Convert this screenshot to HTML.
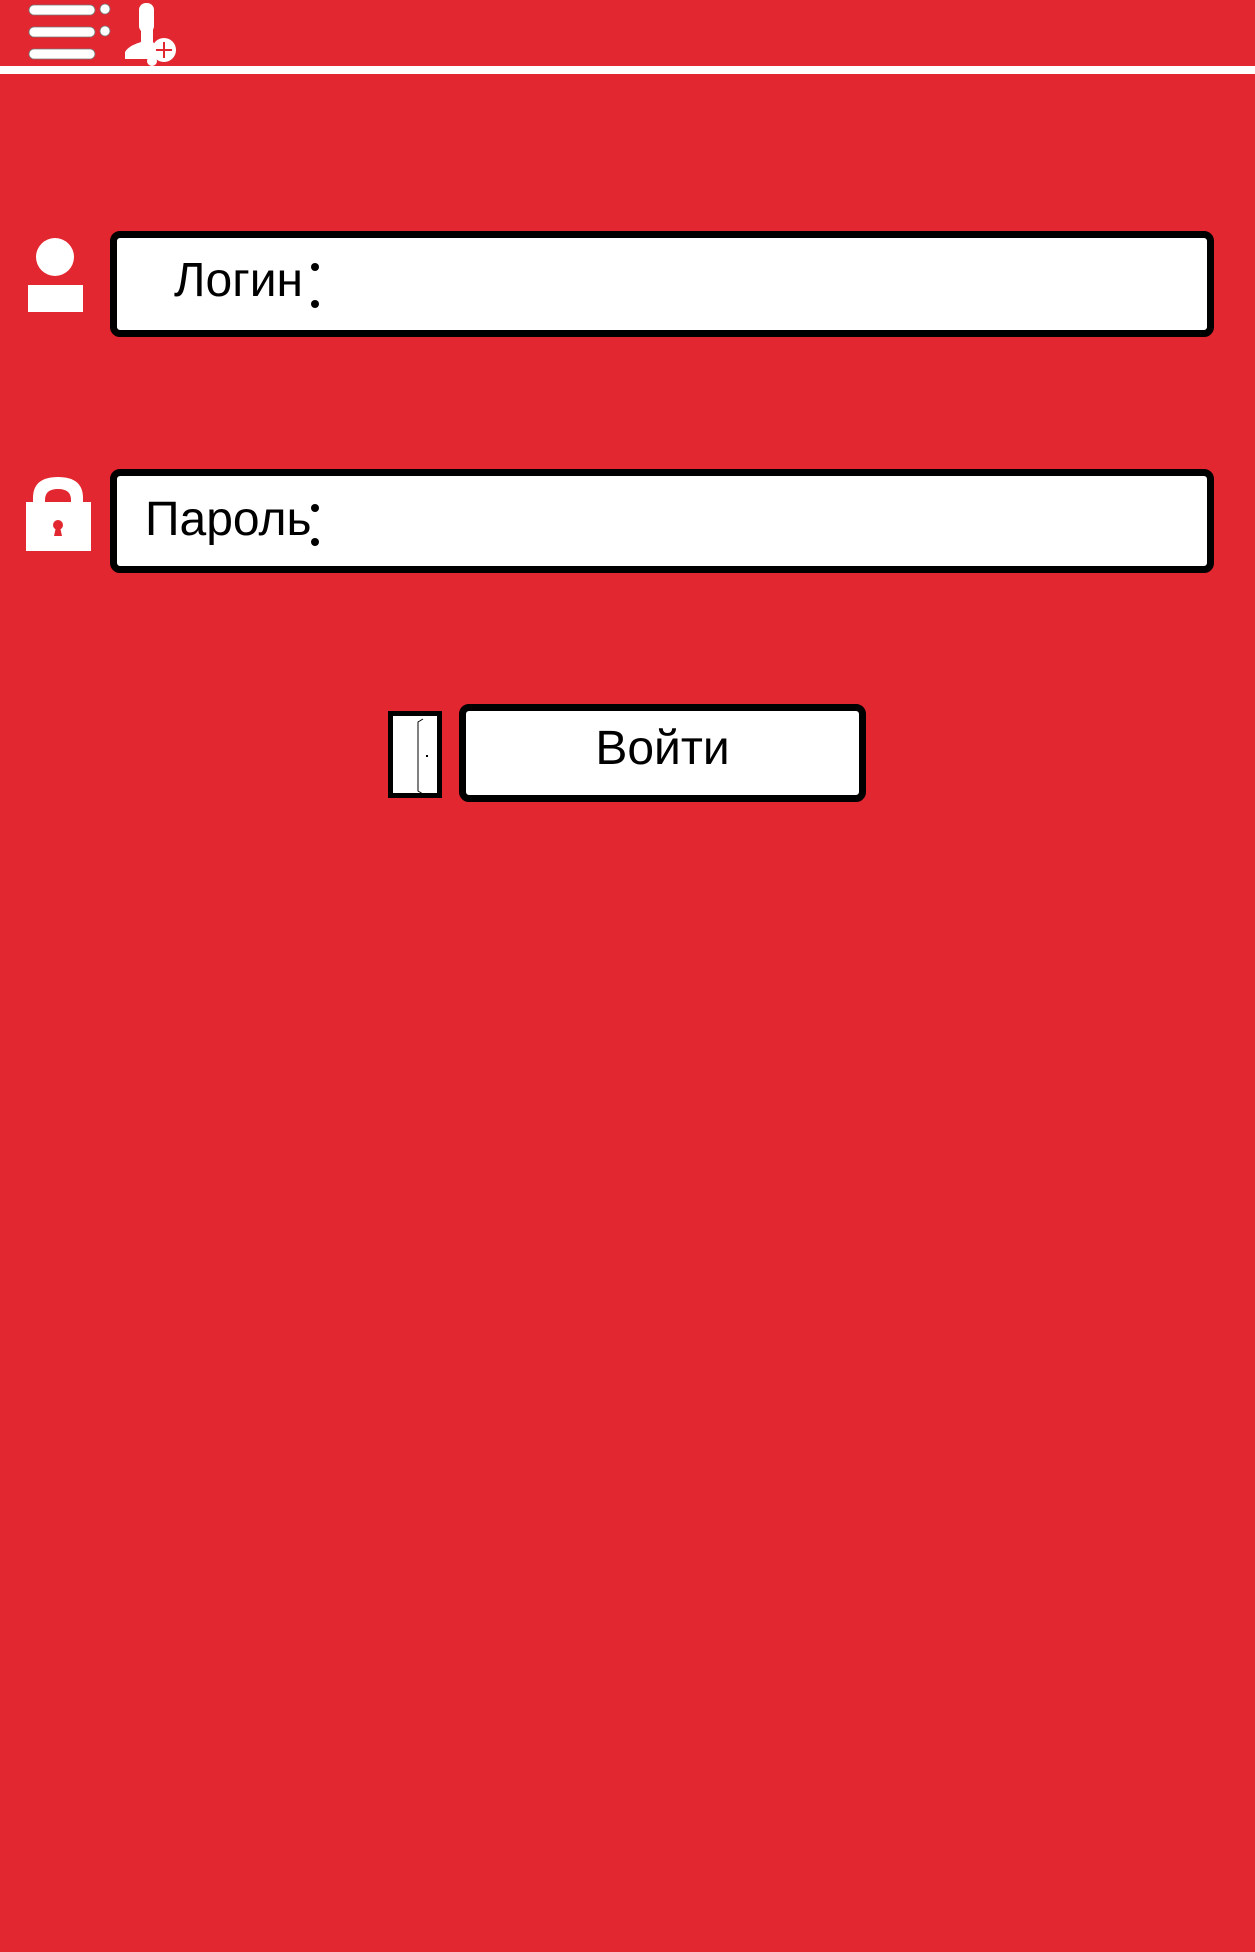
<!DOCTYPE html>
<html><head><meta charset="utf-8"><style>
*{margin:0;padding:0;box-sizing:border-box}
body{width:1255px;height:1952px;background:#e22730;position:relative;overflow:hidden;font-family:"Liberation Sans","DejaVu Sans",sans-serif}
.abs{position:absolute}
.box{position:absolute;background:#fff;border:7px solid #000;border-radius:10px}
.lbl{position:absolute;font-size:48px;color:#000;line-height:1}
.dot{position:absolute;width:8px;height:8px;border-radius:50%;background:#000}
</style></head><body>
<svg class="abs" style="left:0;top:0" width="260" height="66">
<g fill="#fff" stroke="#777" stroke-width="0.8">
<rect x="29" y="5" width="66" height="10" rx="5"/>
<rect x="29" y="27" width="66" height="10" rx="5"/>
<rect x="29" y="49" width="66" height="10" rx="5"/>
<circle cx="105" cy="9" r="5"/>
<circle cx="105" cy="31" r="5"/>
</g>
<g fill="#fff">
<rect x="139" y="3" width="15" height="30" rx="7"/>
<path d="M141 28 L153 28 L153 42 L156 46 L156 59 L125 59 L125 52 Q128 46 141 42 Z"/>
<circle cx="152" cy="61" r="5"/>
<circle cx="164" cy="50" r="12"/>
</g>
<path d="M164 42 V58 M156 50 H172" stroke="#e22730" stroke-width="2"/>
</svg>
<div class="abs" style="left:0;top:66px;width:1255px;height:8px;background:#fff"></div>

<svg class="abs" style="left:0;top:230" width="100" height="100">
<circle cx="55" cy="27" r="19" fill="#fff"/>
<rect x="28" y="55" width="55" height="27" fill="#fff"/>
</svg>
<div class="box" style="left:110px;top:231px;width:1104px;height:106px"></div>
<div class="lbl" style="left:174px;top:257px">Логин</div>
<div class="dot" style="left:311px;top:263px"></div>
<div class="dot" style="left:311px;top:300px"></div>

<svg class="abs" style="left:0;top:470" width="100" height="90">
<path d="M33 32 V28 Q33 7 58 7 Q83 7 83 28 V32 H71 V30 Q71 19 58 19 Q45 19 45 30 V32 Z" fill="#fff"/>
<rect x="26" y="32" width="65" height="49" fill="#fff"/>
<circle cx="58" cy="55" r="5" fill="#e22730"/>
<path d="M56 57 L54 66 H62 L60 57 Z" fill="#e22730"/>
</svg>
<div class="box" style="left:110px;top:469px;width:1104px;height:104px"></div>
<div class="lbl" style="left:145px;top:496px">Пароль</div>
<div class="dot" style="left:311px;top:504px"></div>
<div class="dot" style="left:311px;top:538px"></div>

<svg class="abs" style="left:388px;top:711px" width="56" height="88">
<rect x="2.5" y="2.5" width="49" height="82" fill="#fff" stroke="#000" stroke-width="5"/>
<path d="M35 8 L30 11 V80 L35 83" fill="none" stroke="#000" stroke-width="1"/>
<rect x="38" y="44" width="2" height="2" fill="#000"/>
</svg>
<div class="box" style="left:459px;top:704px;width:407px;height:98px"></div>
<div class="lbl" style="left:459px;top:725px;width:407px;text-align:center">Войти</div>
</body></html>
